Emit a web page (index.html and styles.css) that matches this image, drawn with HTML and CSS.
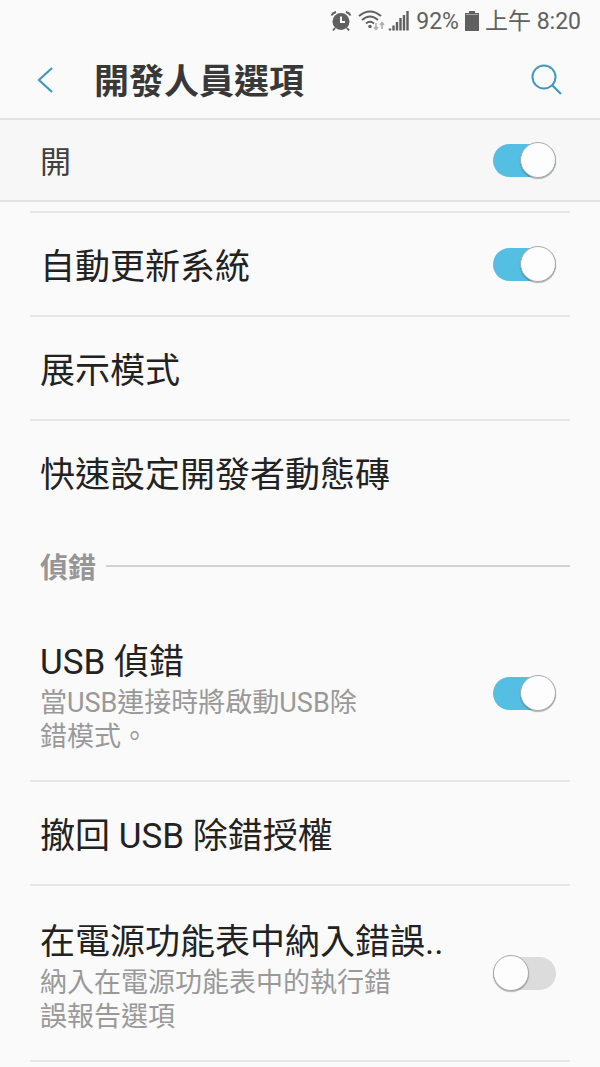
FILE: index.html
```
<!DOCTYPE html>
<html lang="zh-Hant">
<head>
    <meta charset="UTF-8" />
    <meta name="viewport" content="width=device-width, initial-scale=1.0" />
    <title>開發人員選項</title>
    <link rel="stylesheet" href="styles.css">
</head>
<body>
    <div class="status">
        <svg class="alarm" width="22" height="22" viewBox="0 0 22 22">
            <circle cx="11" cy="11.500" r="8.500" fill="#606060" />
            <path d="M1.500 5.500Q2.500 3 6 2M20.500 5.500Q19.500 3 16 2M5 18L3 20.500M17 18L19 20.500" stroke="#606060" stroke-width="2" fill="none" />
            <path d="M11 6.500V12H15" stroke="#fafafa" stroke-width="2" fill="none" />
        </svg>
        <svg class="wifi" width="28" height="22" viewBox="0 0 28 22">
            <path d="M1 6Q12 -3 23 6M4 10Q12 3 20 10M8 13.500Q12 10 16 13.500" stroke="#606060" stroke-width="2" fill="none" />
            <circle cx="12" cy="16.500" r="1.700" fill="#606060" />
            <path d="M18 13V19M16 17L18 19.500L20 17M24 19V13M22 15L24 12.500L26 15" stroke="#b0b0b0" stroke-width="1.600" fill="none" />
        </svg>
        <svg class="signal" width="22" height="22" viewBox="0 0 22 22">
            <path d="M2 20.500V18.500M5.500 20.500V15.500M9 20.500V12M12.500 20.500V8M16 20.500V5M19.500 20.500V1" stroke="#606060" stroke-width="2.400" fill="none" />
        </svg>
        <span class="percent">92%</span>
        <svg class="battery" width="14" height="22" viewBox="0 0 14 22">
            <path d="M4 1H10V3H14V21H0V3H4Z" fill="#606060" />
            <path d="M1 4.500H13" stroke="#a8a8a8" stroke-width="1" />
        </svg>
        <span class="time">上午 8:20</span>
    </div>
    <header>
        <button class="back" aria-label="返回">
            <svg width="18" height="30" viewBox="0 0 18 30">
                <path d="M15 3L2 15L15 27" stroke="#4199bb" stroke-width="2.200" fill="none" />
            </svg>
        </button>
        <h1>開發人員選項</h1>
        <button class="search" aria-label="搜尋">
            <svg width="32" height="32" viewBox="0 0 32 32">
                <circle cx="13" cy="13" r="11.500" stroke="#4199bb" stroke-width="2" fill="none" />
                <path d="M21 21L30 30" stroke="#4199bb" stroke-width="2.200" />
            </svg>
        </button>
    </header>
    <div class="master">
        <label for="all">開</label>
        <input class="toggle" type="checkbox" id="all" checked />
    </div>
    <main>
        <div class="row">
            <label class="title" for="update">自動更新系統</label>
            <input class="toggle" type="checkbox" id="update" checked />
        </div>
        <div class="row">
            <p class="title">展示模式</p>
        </div>
        <div class="row">
            <p class="title">快速設定開發者動態磚</p>
        </div>
        <h2>偵錯</h2>
        <div class="row tall first">
            <label for="usb">
                <span class="title">USB 偵錯</span>
                <span class="desc">當USB連接時將啟動USB除<br>錯模式。</span>
            </label>
            <input class="toggle" type="checkbox" id="usb" checked />
        </div>
        <div class="row">
            <p class="title">撤回 USB 除錯授權</p>
        </div>
        <div class="row tall">
            <label for="report">
                <span class="title">在電源功能表中納入錯誤..</span>
                <span class="desc">納入在電源功能表中的執行錯<br>誤報告選項</span>
            </label>
            <input class="toggle" type="checkbox" id="report" />
        </div>
        <div class="end"></div>
    </main>
</body>
</html>
```
FILE: styles.css
```
* {
    box-sizing: border-box;
}
body {
    margin: 0;
    background-color: #fafafa;
    color: #222;
    font-family: Roboto, "Noto Sans CJK TC", sans-serif;
}
.status {
    display: flex;
    justify-content: flex-end;
    align-items: center;
    height: 42px;
    padding-right: 19px;
    color: #606060;
    font-size: 23px;
    line-height: 42px;
}
.status span {
    padding-top: 2px;
}
.wifi {
    margin-left: 6px;
}
.signal {
    margin-left: 2px;
}
.percent {
    margin-left: 6px;
}
.battery {
    margin: 0 6px;
}
header {
    display: flex;
    align-items: center;
    height: 78px;
    padding: 0 37px 0 37px;
    border-bottom: 2px solid #e3e3e3;
}
button {
    display: flex;
    padding: 0;
    border: none;
    background: none;
    cursor: pointer;
}
h1 {
    flex: 1;
    margin: 0 0 0 39px;
    padding-top: 6px;
    color: #383838;
    font-size: 35px;
    line-height: 42px;
}
.master {
    display: flex;
    justify-content: space-between;
    align-items: center;
    height: 82px;
    padding: 0 44px 0 40px;
    border-bottom: 2px solid #e3e3e3;
    background-color: #f7f7f7;
    color: #404040;
    font-size: 31px;
}
.master label {
    padding-bottom: 2px;
}
main {
    padding: 9px 30px 0;
}
.row {
    display: flex;
    justify-content: space-between;
    align-items: center;
    height: 104px;
    padding: 0 14px 0 10px;
    border-top: 2px solid #e6e6e6;
}
.tall {
    height: 176px;
}
.first {
    height: 174px;
    border-top: none;
}
.end {
    border-top: 2px solid #e6e6e6;
}
.title {
    display: block;
    margin: 0;
    padding-top: 8px;
    font-size: 35px;
    line-height: 46px;
}
.desc {
    display: block;
    color: #999;
    font-size: 27px;
    line-height: 34px;
}
h2 {
    display: flex;
    align-items: center;
    height: 83px;
    margin: 0;
    padding: 2px 0 0 10px;
    color: #969696;
    font-size: 28px;
}
h2::after {
    content: "";
    flex: 1;
    height: 2px;
    margin-left: 10px;
    background-color: #d2d2d2;
}
.toggle {
    display: flex;
    align-items: center;
    flex: none;
    appearance: none;
    width: 63px;
    height: 33px;
    margin: 0;
    border-radius: 17px;
    background-color: #dcdcdc;
    cursor: pointer;
}
.toggle::before {
    content: "";
    flex: none;
    width: 34px;
    height: 34px;
    border: 1px solid #aaa;
    border-radius: 50%;
    background-color: #fdfdfd;
    box-shadow: 0 1px 1px rgba(0, 0, 0, 0.3);
}
.toggle:checked {
    justify-content: flex-end;
    background-color: #55bfe3;
}
```
